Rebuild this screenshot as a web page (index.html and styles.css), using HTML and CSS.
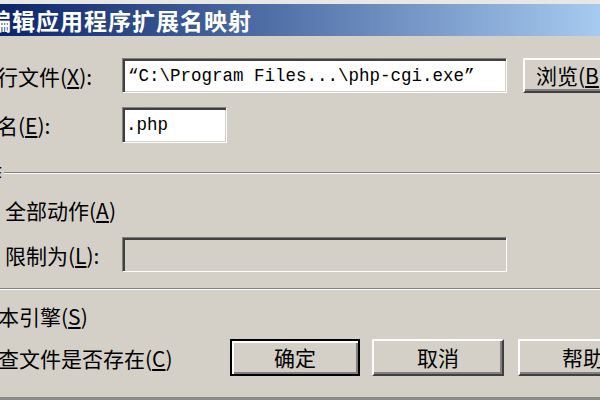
FILE: index.html
```html
<!DOCTYPE html>
<html lang="zh-CN">
<head>
<meta charset="utf-8">
<title>编辑应用程序扩展名映射</title>
<link rel="stylesheet" href="styles.css">
</head>
<body>
<div class="window">
  <div class="frame-top"></div>
  <div class="titlebar"><span class="title">编辑应用程序扩展名映射</span></div>
  <div class="dialog">
    <div class="field-row">
      <label class="label">可执行文件<span class="key">(<u>X</u>):</span></label>
      <div class="textbox wide">“C:\Program Files...\php-cgi.exe”</div>
      <button class="btn browse">浏览<span class="key">(<u>B</u>)...</span></button>
    </div>
    <div class="field-row row-ext">
      <label class="label">扩展名<span class="key">(<u>E</u>):</span></label>
      <div class="textbox short">.php</div>
    </div>
    <fieldset class="group">
      <legend class="legend">动作</legend>
      <div class="option"><span class="radio checked"></span><span class="opt-label">全部动作<span class="key">(<u>A</u>)</span></span></div>
      <div class="option limit"><span class="radio"></span><span class="opt-label limit-label">限制为<span class="key">(<u>L</u>):</span></span><div class="textbox wide disabled"></div></div>
    </fieldset>
    <div class="check-row"><span class="checkbox"></span><span>脚本引擎<span class="key">(<u>S</u>)</span></span></div>
    <div class="bottom-row">
      <div class="check-row"><span class="checkbox"></span><span>检查文件是否存在<span class="key">(<u>C</u>)</span></span></div>
      <div class="buttons">
        <button class="btn default ok">确定</button>
        <button class="btn cancel">取消</button>
        <button class="btn help">帮助</button>
      </div>
    </div>
  </div>
  <div class="frame-bottom"></div>
</div>
</body>
</html>
```
FILE: styles.css
```css
html, body {
  margin: 0;
  padding: 0;
}
body {
  width: 600px;
  height: 400px;
  overflow: hidden;
  background: #d4d0c8;
  font-family: "Noto Sans CJK SC", "Noto Sans", sans-serif;
  font-size: 21px;
  color: #000;
}
.window {
  margin-left: -54px;
  width: 720px;
  height: 400px;
  display: flex;
  flex-direction: column;
}
.frame-top {
  height: 4px;
  background: #e9e7e3;
}
.titlebar {
  height: 32px;
  background: linear-gradient(to right, #0a246a 54px, #a6caf0 654px);
  display: flex;
  align-items: center;
  padding-left: 42px;
}
.title {
  color: #fff;
  font-weight: 700;
  font-size: 23px;
  letter-spacing: 1px;
  line-height: 32px;
  white-space: nowrap;
}
.dialog {
  flex: 1;
  display: flex;
  flex-direction: column;
  padding: 22px 0 0 9px;
}
.field-row {
  display: flex;
  align-items: center;
}
.label {
  width: 167px;
  line-height: 24px;
  white-space: nowrap;
}
.key u {
  text-underline-offset: 2px;
}
.textbox {
  box-sizing: border-box;
  height: 35px;
  border: 1px solid;
  border-color: #808080 #fff #fff #808080;
  box-shadow: inset 2px 2px 0 #404040, inset -1px -1px 0 #d4d0c8;
  background: #fff;
  font-family: "Liberation Mono", monospace;
  font-size: 17.5px;
  display: flex;
  align-items: center;
  padding-left: 5px;
  white-space: nowrap;
}
.wide {
  width: 385px;
}
.short {
  width: 105px;
  height: 36px;
  padding-left: 3px;
}
.row-ext {
  margin-top: 14px;
}
.btn {
  box-sizing: border-box;
  height: 37px;
  border: 2px solid;
  border-color: #fff #404040 #404040 #fff;
  box-shadow: inset -2px -2px 0 #808080;
  background: #d4d0c8;
  font-family: inherit;
  font-size: 21px;
  line-height: 1;
  color: #000;
  padding: 0;
}
.browse {
  margin-left: 16px;
  width: 140px;
  height: 35px;
  text-align: left;
  padding-left: 11px;
  white-space: nowrap;
}
.group {
  margin: 17px 0 0 -5px;
  padding: 14px 0 16px 0;
  border: 1px solid #808080;
  box-shadow: inset 1px 1px 0 #fff, 1px 1px 0 #fff;
  min-width: 0;
}
.legend {
  margin-left: 7px;
  padding: 0 2px;
  line-height: 24px;
  background: #d4d0c8;
}
.option {
  display: flex;
  align-items: center;
  height: 24px;
  line-height: 24px;
  padding-left: 54px;
  white-space: nowrap;
}
.radio {
  box-sizing: border-box;
  width: 22px;
  height: 22px;
  margin-left: -30px;
  margin-right: 8px;
  border-radius: 50%;
  border: 2px solid #808080;
  background: #fff;
}
.limit {
  margin-top: 15px;
  height: 35px;
}
.limit-label {
  width: 117px;
}
.disabled {
  background: #d4d0c8;
}
.check-row {
  display: flex;
  align-items: center;
  height: 24px;
  line-height: 24px;
  margin: 15px 0 0 -8px;
  white-space: nowrap;
}
.checkbox {
  box-sizing: border-box;
  width: 22px;
  height: 22px;
  margin-right: 8px;
  border: 2px solid #808080;
  background: #fff;
}
.bottom-row {
  display: flex;
  align-items: center;
  height: 37px;
  margin-top: 11px;
}
.bottom-row .check-row {
  margin-top: 0;
  width: 283px;
}
.buttons {
  display: flex;
}
.ok {
  width: 130px;
}
.cancel {
  width: 132px;
  margin-left: 12px;
}
.help {
  width: 130px;
  margin-left: 14px;
}
.default {
  border: 2px solid #000;
  box-shadow: inset 2px 2px 0 #fff, inset -2px -2px 0 #808080;
}
.frame-bottom {
  height: 3px;
  background: #8c8c8a;
}
```
